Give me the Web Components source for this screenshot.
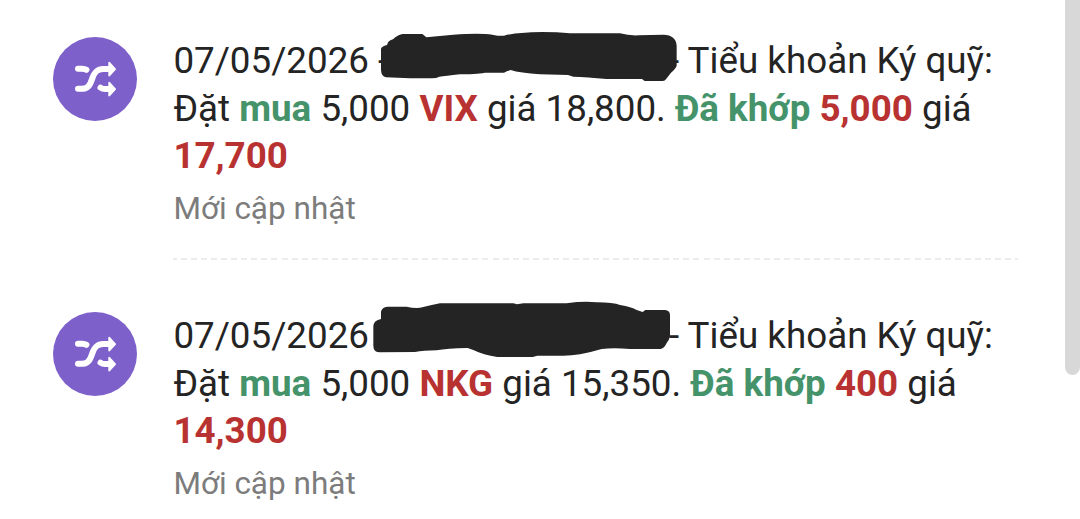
<!DOCTYPE html>
<html lang="vi">
<head>
<meta charset="utf-8">
<title>Thông báo</title>
<style>
  html, body { margin: 0; height: 100%; overflow: hidden; }
  body { background: #fff; font-family: Roboto, "Liberation Sans", sans-serif; }
</style>
</head>
<body>
<notice-list>
  <notice-item>
    07/05/2026 - <hidden-name shape="first"></hidden-name> - Tiểu khoản Ký quỹ: Đặt <order-mark type="buy">mua</order-mark> 5,000 <order-mark>VIX</order-mark> giá 18,800. <order-mark type="buy">Đã khớp</order-mark> <order-mark>5,000</order-mark> giá <order-mark>17,700</order-mark>
    <span slot="time">Mới cập nhật</span>
  </notice-item>
  <notice-item>
    07/05/2026 - <hidden-name shape="second"></hidden-name> - Tiểu khoản Ký quỹ: Đặt <order-mark type="buy">mua</order-mark> 5,000 <order-mark>NKG</order-mark> giá 15,350. <order-mark type="buy">Đã khớp</order-mark> <order-mark>400</order-mark> giá <order-mark>14,300</order-mark>
    <span slot="time">Mới cập nhật</span>
  </notice-item>
</notice-list>

<script>
class NoticeList extends HTMLElement {
  constructor() {
    super();
    this.attachShadow({ mode: 'open' });
    this.shadowRoot.innerHTML = `
      <style>
        :host {
          display: flex;
          height: 519px;
          overflow: hidden;
          background-color: #fff;
        }
        .items {
          flex: 1;
          min-width: 0;
          padding: 37px 47px 0 53px;
        }
        .thumb {
          flex: none;
          width: 15px;
          height: 375px;
          border-radius: 0 0 7.5px 7.5px;
          background-color: #d8d8d8;
        }
      </style>
      <div class="items"><slot></slot></div>
      <div class="thumb"></div>
    `;
  }
}

class ShuffleIcon extends HTMLElement {
  constructor() {
    super();
    this.attachShadow({ mode: 'open' });
    this.shadowRoot.innerHTML = `
      <style>
        :host {
          display: block;
          flex: none;
          width: 84px;
          height: 84px;
          border-radius: 50%;
          background-color: #7e60cb;
        }
        svg { display: block; }
      </style>
      <svg width="84" height="84" viewBox="0 0 84 84" fill="none" stroke="#fff" stroke-width="6" stroke-linecap="round">
        <path d="M25 31.8h4c2 0 3.400.3 4.400 1" />
        <path d="M25 51.800h3.200c6 0 8.500-2.500 10.700-9.300 2.300-7.500 5.300-10.500 11.300-10.500h5" />
        <path d="M47.500 50.600c1.300.9 2.500 1.400 4.500 1.400h3.500" />
        <path d="M56.300 25.800v12.600l5.700-6.300zM56.300 45.800v12.600l5.700-6.300z" fill="#fff" stroke-width="2" stroke-linejoin="round" />
      </svg>
    `;
  }
}

class NoticeItem extends HTMLElement {
  constructor() {
    super();
    this.attachShadow({ mode: 'open' });
    this.shadowRoot.innerHTML = `
      <style>
        :host {
          display: flex;
          gap: 36px;
          height: 275.3px;
        }
        .content {
          flex: 1;
          min-width: 0;
          height: 221px;
          border-bottom: 2px solid transparent;
          border-image: repeating-linear-gradient(90deg, #ececec 0 6px, transparent 6px 10px) 2;
        }
        .message {
          padding-left: 0.4px;
          color: #242424;
          font-size: 36.75px;
          line-height: 47.5px;
        }
        .time {
          margin-top: 9px;
          padding-left: 0.4px;
          color: #7c7c7c;
          font-size: 31.5px;
          line-height: 40px;
        }
      </style>
      <shuffle-icon></shuffle-icon>
      <div class="content">
        <div class="message"><slot></slot></div>
        <div class="time"><slot name="time"></slot></div>
      </div>
    `;
  }
}

class OrderMark extends HTMLElement {
  constructor() {
    super();
    this.attachShadow({ mode: 'open' });
    this.shadowRoot.innerHTML = `
      <style>
        :host { display: inline; color: #b93232; font-weight: 700; }
        :host([type="buy"]) { color: #45936a; }
      </style>
      <slot></slot>`.replace(/>\s+</g, '><');
  }
}

// marker strokes over the account holder's name, drawn at three units per pixel
const STROKES = {
  first: {
    left: -27.4, top: -22, width: 320, height: 65,
    path: 'M33 72Q34 64 51 60Q53 50 61 46L69 43Q80 31 98 27H157L169 37L250 29Q330 24 367 29Q391 34 402 32Q430 25 455 24Q500 19 560 22L600 25H750Q775 32 805 31L880 29Q918 30 920 62V122Q918 130 903 143L889 161Q885 168 878 168H824L816 162H710Q650 156 610 155L594 150L510 148Q450 144 422 135Q411 138 402 143H345Q335 147 270 148Q225 153 208 155Q200 160 185 160H120L48 157Q34 155 33 135Z'
  },
  second: {
    left: -37.4, top: -27, width: 340, height: 70,
    path: 'M63 50Q66 36 82 35H140Q170 42 190 36Q215 30 240 25H460L471 28L490 25H620Q670 18 710 22Q760 22 780 30Q815 36 830 45L848 51L856 45H915Q930 46 930 60V125Q927 135 920 144Q913 160 902 162H810Q760 157 725 162Q695 171 660 178Q630 183 600 182H532L518 186H412Q370 180 340 165L323 159Q260 160 230 166Q190 166 165 171L60 172Q40 171 40 152V92Q42 76 63 72Z'
  }
};

class HiddenName extends HTMLElement {
  constructor() {
    super();
    this.attachShadow({ mode: 'open' });
  }

  connectedCallback() {
    const s = STROKES[this.getAttribute('shape')];
    this.shadowRoot.innerHTML = `
      <style>
        :host {
          display: inline-block;
          position: relative;
          width: 262.6px;
          height: 26px;
        }
        svg {
          position: absolute;
          left: ${s.left}px;
          top: ${s.top}px;
        }
      </style>
      <svg width="${s.width}" height="${s.height}" viewBox="0 0 ${s.width * 3} ${s.height * 3}">
        <path fill="#242424" d="${s.path}" />
      </svg>
    `;
  }
}

customElements.define('shuffle-icon', ShuffleIcon);
customElements.define('order-mark', OrderMark);
customElements.define('hidden-name', HiddenName);
customElements.define('notice-item', NoticeItem);
customElements.define('notice-list', NoticeList);
</script>
</body>
</html>
